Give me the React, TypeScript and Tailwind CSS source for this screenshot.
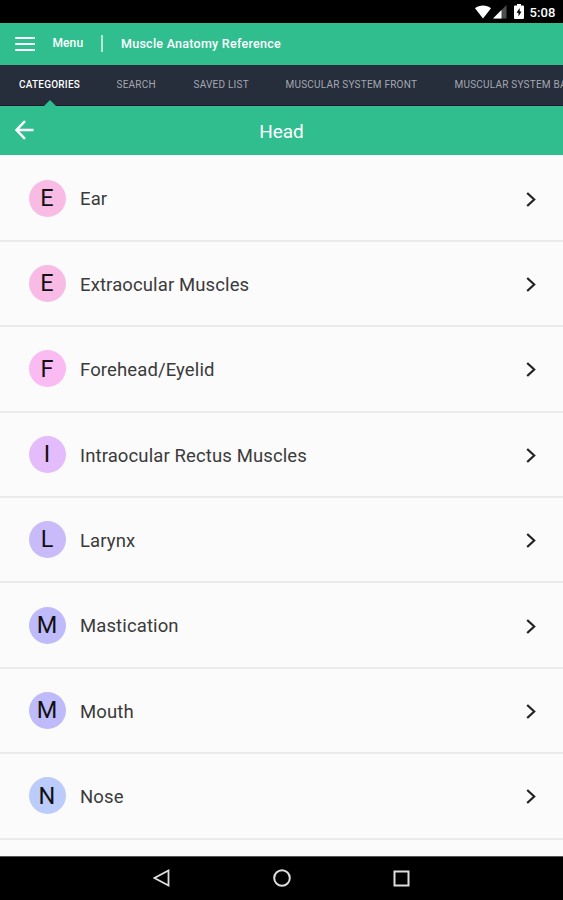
import React from "react";

type Item = { label: string; color: string };

const items: Item[] = [
  { label: "Ear", color: "bg-[#f8bbe3]" },
  { label: "Extraocular Muscles", color: "bg-[#f8bbe6]" },
  { label: "Forehead/Eyelid", color: "bg-[#f9bbf2]" },
  { label: "Intraocular Rectus Muscles", color: "bg-[#e4bbfb]" },
  { label: "Larynx", color: "bg-[#c9bbfa]" },
  { label: "Mastication", color: "bg-[#bfbbfa]" },
  { label: "Mouth", color: "bg-[#bfbbfa]" },
  { label: "Nose", color: "bg-[#bbccfa]" },
];

function StatusBar() {
  return (
    <div className="flex h-[22.5px] shrink-0 items-center justify-end bg-black pr-[7.500px] text-white">
      <svg className="mt-[1px] h-[14px] w-[16px]" viewBox="0 0 16 14" fill="currentColor">
        <path d="M0 3.3C2.2 1.5 5 .5 8 .5s5.800 1 8 2.800L8 13.500z" />
      </svg>
      <svg className="ml-[2px] mt-[1px] h-[14px] w-[14px]" viewBox="0 0 14 14" fill="currentColor">
        <path d="M0 13.500 13.500 0v13.500z" opacity=".3" />
        <path d="M0 13.500 8.500 5v8.500z" />
      </svg>
      <svg className="ml-[7px] h-[15px] w-[10px]" viewBox="0 0 10 15">
        <path fill="#fff" d="M3 0h4v1.500h2q1 0 1 1V14q0 1-1 1H1q-1 0-1-1V2.500q0-1 1-1h2z" />
        <path fill="#000" d="M5.700 4 2.500 8.800h2V12.500l3-5h-1.800z" />
      </svg>
      <span className="ml-[6px] mt-[2px] text-[13px] font-medium leading-none tracking-[0.100px]">5:08</span>
    </div>
  );
}

function Header() {
  return (
    <header className="flex h-[42px] shrink-0 items-center bg-[#30be8f] pl-[15px] text-white">
      <div className="flex w-[20px] flex-col gap-[4px]">
        <span className="h-[2px] rounded-full bg-white" />
        <span className="h-[2px] rounded-full bg-white" />
        <span className="h-[2px] rounded-full bg-white" />
      </div>
      <span className="-mt-[2px] ml-[17.500px] w-[48px] text-[12px] font-medium leading-none tracking-[0.100px]">Menu</span>
      <span className="h-[17px] w-[2px] bg-[#b5e8d5]" />
      <span className="ml-[18.500px] mt-[1px] whitespace-nowrap text-[12.500px] font-medium leading-none tracking-[0.260px]">
        Muscle Anatomy Reference
      </span>
    </header>
  );
}

function Tabs() {
  return (
    <nav className="flex h-[41.500px] shrink-0 items-center overflow-hidden whitespace-nowrap bg-[#262d3b] pl-[19px] text-[10px] leading-none tracking-[0.220px] text-[#a5a8af] shadow-[inset_0_-1px_0_#211630]">
      <div className="relative flex h-full w-[97.500px] shrink-0 items-center font-medium text-white">
        <span>CATEGORIES</span>
        <svg className="absolute bottom-0 left-[24.500px] h-[6px] w-[12px]" viewBox="0 0 12 6" fill="#30be8f">
          <path d="M0 6 6 0l6 6z" />
        </svg>
      </div>
      <span className="w-[77px] shrink-0">SEARCH</span>
      <span className="w-[92px] shrink-0">SAVED LIST</span>
      <span className="w-[169px] shrink-0">MUSCULAR SYSTEM FRONT</span>
      <span className="shrink-0">MUSCULAR SYSTEM BACK</span>
    </nav>
  );
}

function TitleBar() {
  return (
    <div className="grid h-[49px] shrink-0 grid-cols-[1fr_auto_1fr] items-center bg-[#30be8f] pl-[15px] pr-[15px] text-white">
      <svg className="-mt-[2px] h-[20px] w-[20px]" viewBox="0 0 20 20" fill="none" stroke="currentColor" strokeWidth="2.400">
        <path d="M18.500 10H1.800M10 1.200 1.500 10l8.500 8.800" />
      </svg>
      <h1 className="mt-[2px] text-[19px] leading-none">Head</h1>
    </div>
  );
}

function Row({ label, color }: Item) {
  return (
    <li className="flex h-[85.400px] shrink-0 items-center border-b-2 border-[#ebebeb] pl-[28.500px] pr-[27px]">
      <span className={`flex h-[37px] w-[37px] items-center justify-center rounded-full pt-[1px] text-[23.500px] leading-none text-[#111] ${color}`}>
        {label[0]}
      </span>
      <span className="ml-[14.500px] mt-[3px] flex-1 text-[18.500px] leading-none tracking-[0.120px] text-[#3a3a3a]">
        {label}
      </span>
      <svg className="mt-[2px] h-[15px] w-[10px]" viewBox="0 0 10 15" fill="none" stroke="#222" strokeWidth="2.200">
        <path d="m1.200 1 7 6.500-7 6.500" />
      </svg>
    </li>
  );
}

function NavBar() {
  return (
    <div className="flex h-[44.500px] shrink-0 items-center justify-between border-t border-[#555] bg-black pl-[153px] pr-[153px]">
      <svg className="h-[18px] w-[17px]" viewBox="0 0 17 18" fill="none" stroke="#dedede" strokeWidth="1.800">
        <path d="M15.500 1.500v15L1.500 9z" />
      </svg>
      <svg className="h-[18px] w-[18px]" viewBox="0 0 18 18" fill="none" stroke="#dedede" strokeWidth="2">
        <circle cx="9" cy="9" r="7.800" />
      </svg>
      <svg className="h-[17px] w-[17px]" viewBox="0 0 17 17" fill="none" stroke="#dedede" strokeWidth="2">
        <rect x="1.500" y="1.500" width="14" height="14" />
      </svg>
    </div>
  );
}

export default function App() {
  return (
    <div className="flex h-[900px] w-[563px] flex-col overflow-hidden bg-[#fafafa] font-['Roboto',sans-serif]">
      <StatusBar />
      <Header />
      <Tabs />
      <TitleBar />
      <ul className="flex h-[700.500px] shrink-0 flex-col overflow-hidden bg-[#fbfbfb] pt-[1.400px]">
        {items.map((item) => (
          <Row key={item.label} {...item} />
        ))}
      </ul>
      <NavBar />
    </div>
  );
}
